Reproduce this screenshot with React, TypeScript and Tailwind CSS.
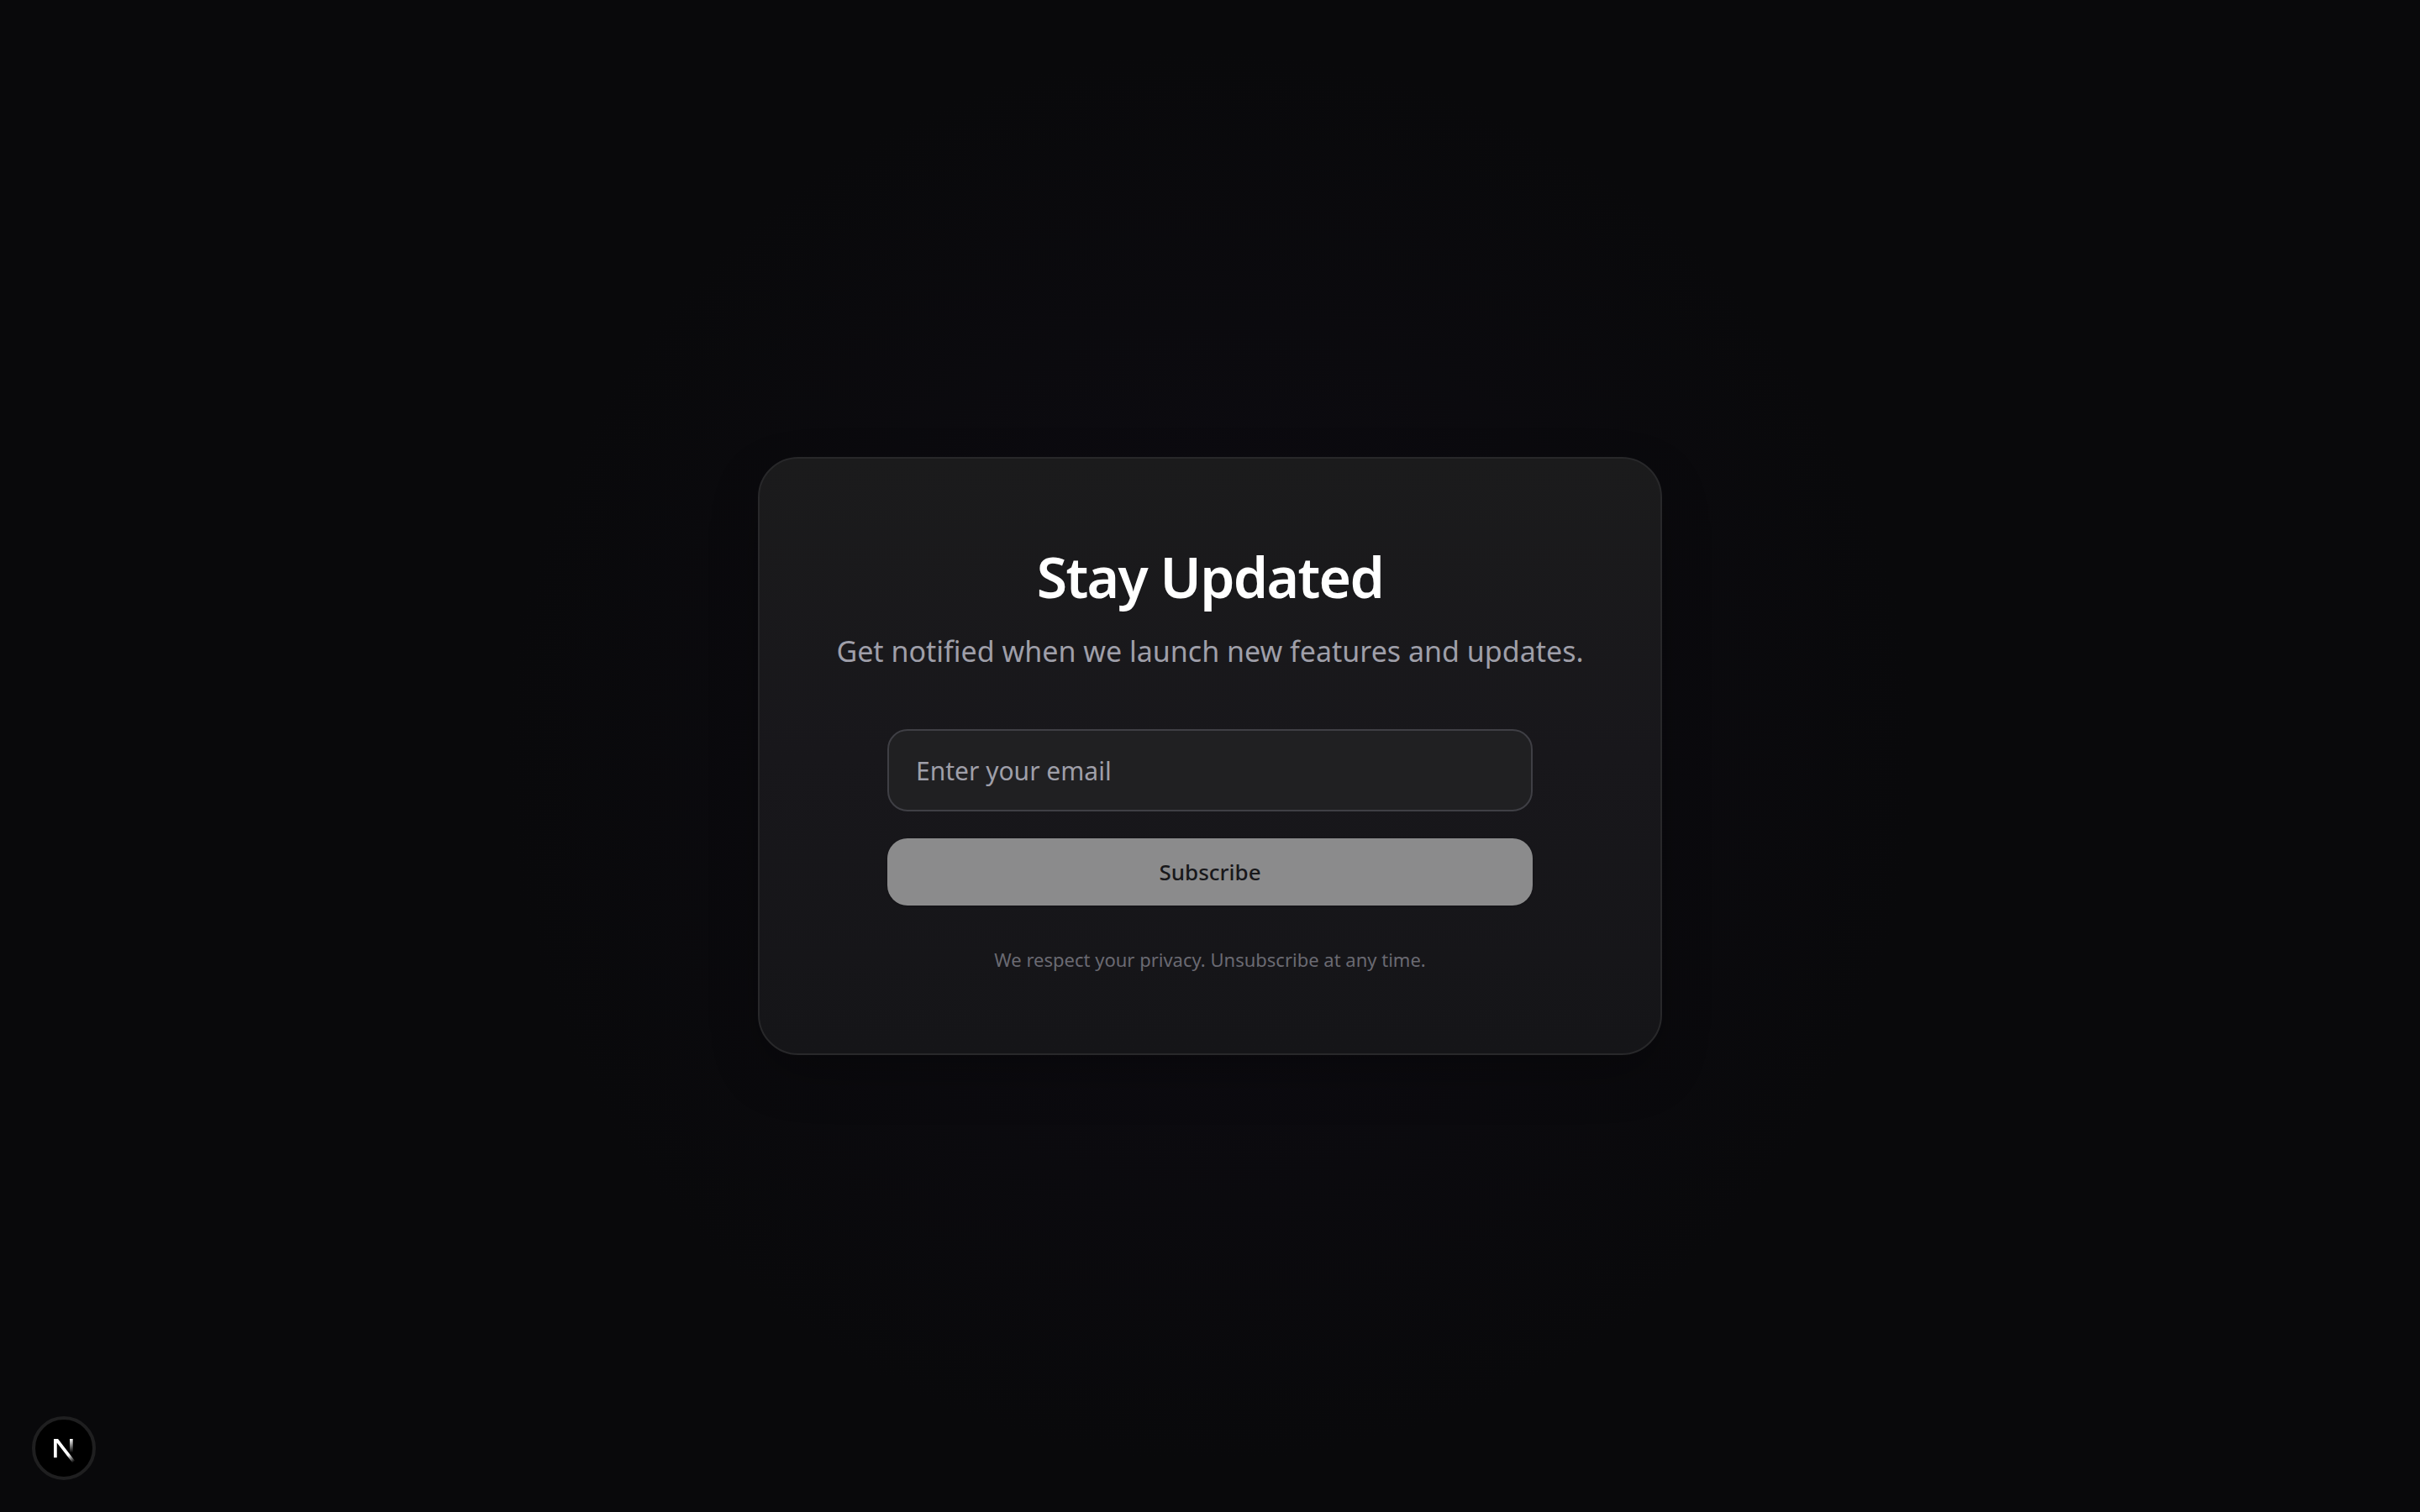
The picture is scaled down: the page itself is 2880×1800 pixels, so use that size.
import React, { useState } from "react";

function NextLogo() {
  return (
    <svg className="h-20 w-20 shrink-0" viewBox="0 0 40 40" fill="none" aria-hidden="true">
      <defs>
        <linearGradient id="diagonal" gradientUnits="userSpaceOnUse" x1="9.95555" y1="11.1226" x2="15.4778" y2="17.9671">
          <stop stopColor="white" />
          <stop offset="0.604072" stopColor="white" stopOpacity="0" />
          <stop offset="1" stopColor="white" stopOpacity="0" />
        </linearGradient>
        <linearGradient id="stem" gradientUnits="userSpaceOnUse" x1="11.8222" y1="1.40039" x2="11.791" y2="9.62542">
          <stop stopColor="white" />
          <stop offset="1" stopColor="white" stopOpacity="0" />
        </linearGradient>
        <mask id="notch">
          <rect width="100%" height="100%" fill="white" />
          <rect width="5" height="1.5" fill="black" />
        </mask>
      </defs>
      <g transform="translate(12.6 13)">
        <path d="M13.3 15.2 L2.34 1 V12.6" stroke="url(#diagonal)" strokeWidth="1.86" mask="url(#notch)" />
        <path d="M11.825 1.5 V13.1" stroke="url(#stem)" strokeWidth="1.86" />
      </g>
    </svg>
  );
}

export default function App() {
  const [email, setEmail] = useState("");
  return (
    <main className="relative flex min-h-screen items-center justify-center bg-[#09090b] bg-[radial-gradient(circle_840px_at_center,#0e0c13,#09090b)] p-8 font-['Noto_Sans',sans-serif]">
      <section className="flex w-full max-w-[1076px] flex-col items-center rounded-[48px] border-2 border-[#28282a] bg-linear-to-b from-[#1b1b1c] via-[#18171b] to-[#151518] px-16 py-24 text-center shadow-[0_24px_64px_-12px_rgba(0,0,0,0.35)]">
        <h1 className="text-[66px] leading-[88px] font-semibold tracking-tight text-white">Stay Updated</h1>
        <p className="mt-4 text-[34px] leading-[58px] text-[#9f9fa9]">Get notified when we launch new features and updates.</p>
        <form className="mt-16 flex w-3xl max-w-full flex-col gap-8" onSubmit={(e) => e.preventDefault()}>
          <input
            type="email"
            aria-label="Email address"
            placeholder="Enter your email"
            value={email}
            onChange={(e) => setEmail(e.target.value)}
            className="h-[98px] w-full rounded-3xl border-2 border-[#3f3f45] bg-[#202022] px-8 text-[30px] text-white outline-none placeholder:text-[#9f9fa9]"
          />
          <button type="submit" disabled={!email} className="h-20 w-full rounded-3xl bg-[#8b8b8c] text-[26px] font-medium text-[#18181b] shadow-sm">
            Subscribe
          </button>
        </form>
        <p className="mt-12 text-[22px] leading-8 text-[#6a6a72]">We respect your privacy. Unsubscribe at any time.</p>
      </section>
      <button
        type="button"
        aria-label="Open Next.js Dev Tools"
        className="fixed bottom-[38px] left-[38px] flex size-[76px] items-center justify-center overflow-hidden rounded-full border-4 border-[#1f1f20] bg-black"
      >
        <NextLogo />
      </button>
    </main>
  );
}
